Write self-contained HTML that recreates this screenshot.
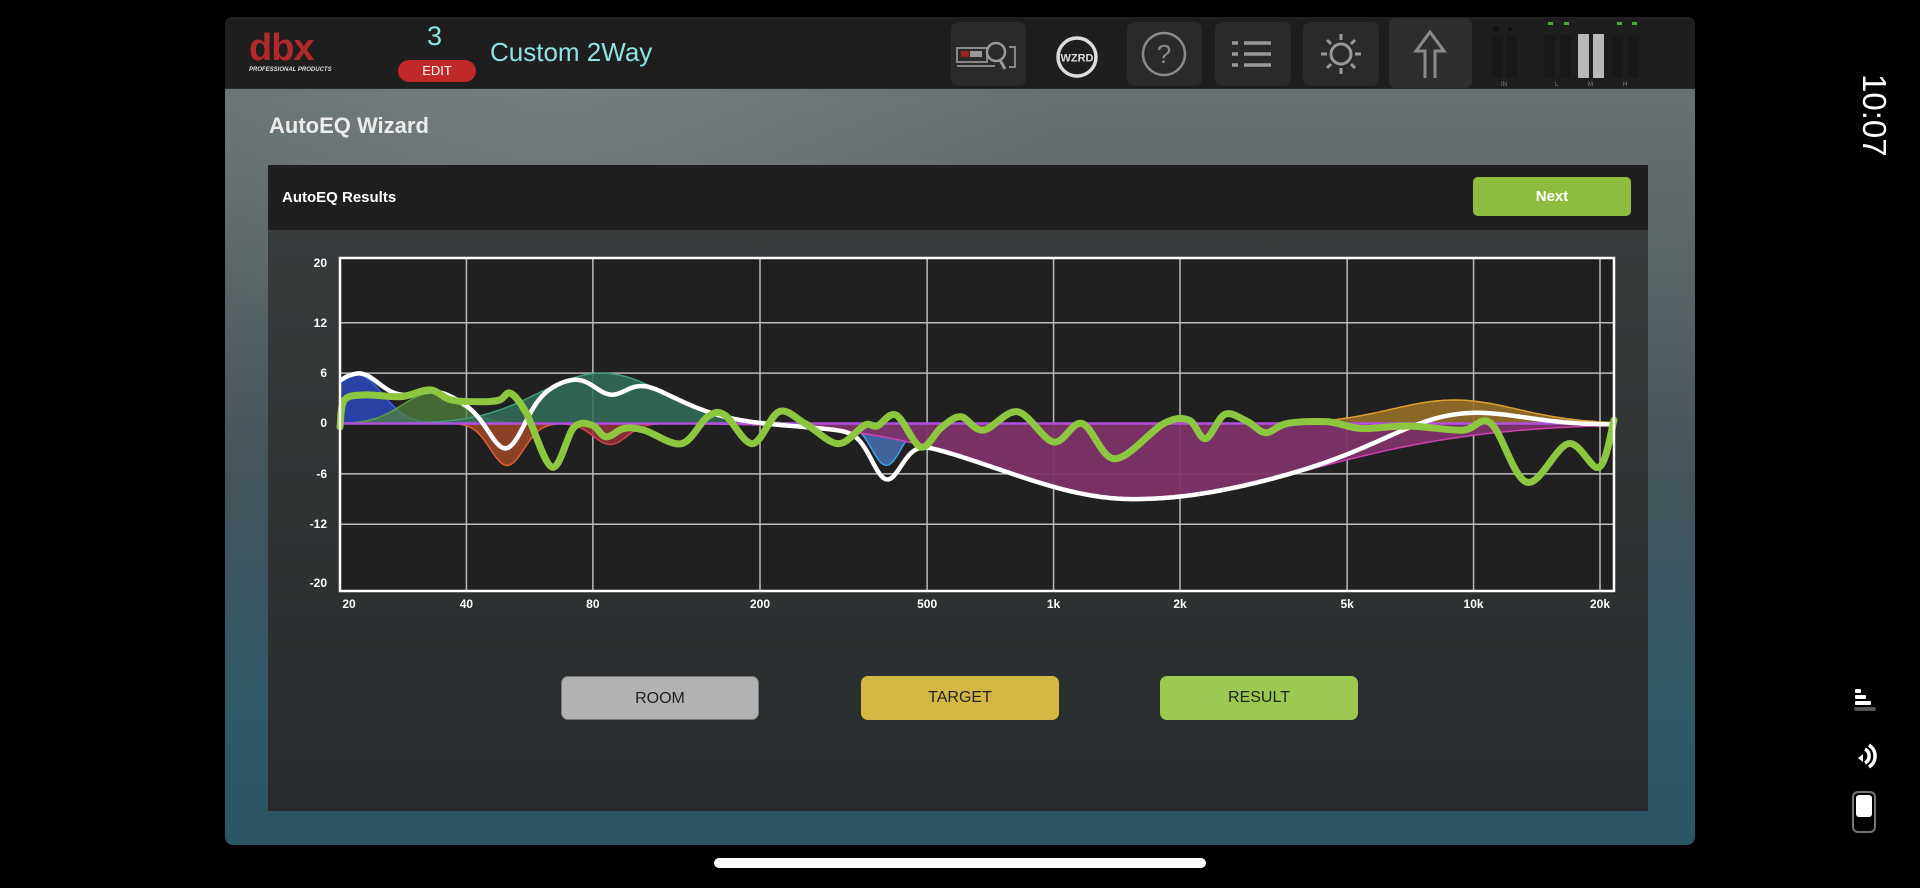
<!DOCTYPE html>
<html><head><meta charset="utf-8">
<style>
*{margin:0;padding:0;box-sizing:border-box}
body{width:1920px;height:888px;background:#000;position:relative;overflow:hidden;font-family:"Liberation Sans",sans-serif}
.app{position:absolute;left:225px;top:17px;width:1470px;height:828px;border-radius:8px;overflow:hidden;
background:
radial-gradient(ellipse 500px 260px at 330px 90px,rgba(140,150,150,0.35),rgba(0,0,0,0) 100%),
linear-gradient(180deg,#6d7675 0%,#5e6869 25%,#44555b 55%,#2e5868 85%,#2b5565 100%);}
.hdr{position:absolute;left:0;top:0;width:1470px;height:72px;background:#1e1e1e;border-bottom:1px solid #2a2a2a}
.abs{position:absolute}
.ib{position:absolute;top:5px;height:64px;background:#2a2a2a;border-radius:7px}
.title{left:44px;top:96px;color:#ececec;font-size:22px;font-weight:bold}
.panel{position:absolute;left:43px;top:148px;width:1380px;height:646px;background:linear-gradient(180deg,#3a3d3e 0%,#303435 50%,#272b2d 100%)}
.phdr{position:absolute;left:0;top:0;width:1380px;height:65px;background:#1f1f1f}
.btn{position:absolute;top:511px;width:198px;height:44px;border-radius:7px;color:#222;font-size:16px;text-align:center;line-height:44px}
</style></head><body>
<div class="app">
 <div class="hdr">
  <div class="abs" style="left:24px;top:14px;color:#b3282b;font-size:38px;font-weight:bold;letter-spacing:-1px;line-height:34px">dbx</div>
  <div class="abs" style="left:24px;top:50px;color:#ddd;font-size:6px;font-style:italic;font-weight:bold">PROFESSIONAL PRODUCTS</div>
  <div class="abs" style="left:202px;top:4px;color:#8fe3e3;font-size:27px">3</div>
  <div class="abs" style="left:173px;top:43px;width:78px;height:22px;border-radius:11px;background:#c0282a;color:#fff;font-size:13px;text-align:center;line-height:22px">EDIT</div>
  <div class="abs" style="left:265px;top:20px;color:#8ee3e3;font-size:26px">Custom 2Way</div>
  <div class="ib" style="left:726px;width:75px"><svg width="75" height="64"><rect x="6" y="26" width="30" height="14" fill="none" stroke="#888" stroke-width="2"/><rect x="10" y="29" width="8" height="6" fill="#a02020"/><rect x="19" y="29" width="12" height="6" fill="#999"/><circle cx="45" cy="30" r="9" fill="none" stroke="#999" stroke-width="2.5"/><line x1="49" y1="38" x2="54" y2="47" stroke="#999" stroke-width="3"/><path d="M58 25h6v20h-6" fill="none" stroke="#888" stroke-width="2"/><line x1="6" y1="44" x2="44" y2="44" stroke="#888" stroke-width="2"/></svg></div>
  <svg class="abs" style="left:829px;top:17px" width="46" height="46"><circle cx="23" cy="23" r="19" fill="none" stroke="#ddd" stroke-width="3.5"/><text x="23" y="27.5" fill="#ddd" font-size="11" font-weight="bold" text-anchor="middle" font-family="Liberation Sans">WZRD</text></svg>
  <div class="ib" style="left:902px;width:75px"><svg width="75" height="64"><circle cx="37" cy="32" r="21" fill="none" stroke="#8a8a8a" stroke-width="2.5"/><text x="37" y="41" fill="#8a8a8a" font-size="26" text-anchor="middle" font-family="Liberation Sans">?</text></svg></div>
  <div class="ib" style="left:990px;width:76px"><svg width="76" height="64"><g stroke="#999" stroke-width="3.5"><line x1="17" y1="21" x2="23" y2="21"/><line x1="29" y1="21" x2="56" y2="21"/><line x1="17" y1="32" x2="23" y2="32"/><line x1="29" y1="32" x2="56" y2="32"/><line x1="17" y1="43" x2="23" y2="43"/><line x1="29" y1="43" x2="56" y2="43"/></g></svg></div>
  <div class="ib" style="left:1078px;width:76px"><svg width="76" height="64"><g stroke="#999" stroke-width="3" fill="none"><circle cx="38" cy="32" r="10"/><line x1="38" y1="12" x2="38" y2="18"/><line x1="38" y1="46" x2="38" y2="52"/><line x1="18" y1="32" x2="24" y2="32"/><line x1="52" y1="32" x2="58" y2="32"/><line x1="24" y1="18" x2="28" y2="22"/><line x1="48" y1="42" x2="52" y2="46"/><line x1="52" y1="18" x2="48" y2="22"/><line x1="28" y1="42" x2="24" y2="46"/></g></svg></div>
  <div class="ib" style="left:1164px;top:1px;width:83px;height:70px;background:#2e2e2e"><svg width="83" height="70"><path d="M36 60V33H27L41 14L55 33H46V60" fill="none" stroke="#8a8a8a" stroke-width="3"/></svg></div>
  <svg class="abs" style="left:1266px;top:0px" width="190" height="72"><g fill="#111"><rect x="3" y="10" width="4" height="4"/><rect x="17" y="10" width="4" height="4"/></g>
   <g fill="#4aa83a"><rect x="57" y="5" width="5" height="3"/><rect x="73" y="5" width="5" height="3"/><rect x="126" y="5" width="5" height="3"/><rect x="141" y="5" width="5" height="3"/></g>
   <g fill="#181818"><rect x="1" y="18" width="11" height="43"/><rect x="15" y="18" width="11" height="43"/><rect x="53" y="18" width="11" height="43"/><rect x="69" y="18" width="11" height="43"/><rect x="121" y="18" width="11" height="43"/><rect x="137" y="18" width="11" height="43"/></g>
   <g fill="#b8b8b8"><rect x="87" y="17" width="11" height="44"/><rect x="102" y="17" width="11" height="44"/></g>
   <g fill="#888" font-size="6" font-family="Liberation Sans"><text x="10" y="69">IN</text><text x="64" y="69">L</text><text x="97" y="69">M</text><text x="132" y="69">H</text></g></svg>
 </div>
 <div class="abs title">AutoEQ Wizard</div>
 <div class="panel">
  <div class="phdr">
   <div class="abs" style="left:14px;top:24px;color:#fff;font-size:15px;font-weight:bold">AutoEQ Results</div>
   <div class="abs" style="left:1205px;top:12px;width:158px;height:39px;background:#8cbd3f;border-radius:5px;color:#fff;font-weight:bold;font-size:15px;text-align:center;line-height:39px">Next</div>
  </div>
  <div class="btn" style="left:293px;background:#b2b2b2;border:1px solid #777">ROOM</div>
  <div class="btn" style="left:593px;background:#d4b843">TARGET</div>
  <div class="btn" style="left:892px;background:#9cc951">RESULT</div>
 </div>
</div>
<svg id="ch" class="abs" style="left:0;top:0" width="1920" height="888"></svg>
<div class="abs" style="left:714px;top:858px;width:492px;height:10px;border-radius:5px;background:#fff"></div>
<div class="abs" style="left:1840px;top:74px;color:#fff;font-size:33px;transform-origin:0 0;transform:translate(53px,0) rotate(90deg)">10:07</div>
<svg class="abs" style="left:1845px;top:680px" width="40" height="170"><g fill="#fff"><rect x="10" y="9" width="6" height="4" rx="1"/><rect x="10" y="15" width="11" height="4" rx="1"/><rect x="10" y="21" width="16" height="4" rx="1"/></g><rect x="9" y="27" width="22" height="4" rx="2" fill="#555"/>
<path d="M13 78l5-4 0 8z" fill="#fff"/><path d="M20 69a8 8 0 0 1 0 14M24 65a13 13 0 0 1 0 22" fill="none" stroke="#fff" stroke-width="3.5"/>
<rect x="8" y="112" width="22" height="40" rx="5" fill="none" stroke="#777" stroke-width="2"/><rect x="11" y="115" width="16" height="22" rx="3" fill="#fff"/></svg>
<script>
var s=document.getElementById('ch'),NS='http://www.w3.org/2000/svg';
function el(t,a){var e=document.createElementNS(NS,t);for(var k in a)e.setAttribute(k,a[k]);s.appendChild(e);return e}
var L=340,R=1614,T=258,B=591;
function X(f){return L+420*Math.log10(f/20)}
function Y(d){return 423.5-8.4*d}
el('rect',{x:L,y:T,width:R-L,height:B-T,fill:'#202020'});
[12,6,0,-6,-12].forEach(function(d){el('line',{x1:L,x2:R,y1:Y(d),y2:Y(d),stroke:'#bbb','stroke-width':1.5})});
[40,80,200,500,1000,2000,5000,10000,20000].forEach(function(f){el('line',{x1:X(f),x2:X(f),y1:T,y2:B,stroke:'#bbb','stroke-width':1.5})});
var yl={20:263,12:323,6:373,0:423,'-6':474,'-12':524,'-20':583};
for(var k in yl){var t=el('text',{x:327,y:yl[k]+4,fill:'#fff','font-size':12,'font-weight':'bold','text-anchor':'end','font-family':'Liberation Sans'});t.textContent=k}
[[20,'20'],[40,'40'],[80,'80'],[200,'200'],[500,'500'],[1000,'1k'],[2000,'2k'],[5000,'5k'],[10000,'10k'],[20000,'20k']].forEach(function(p){var t=el('text',{x:X(p[0])+(p[0]==20?9:0),y:608,fill:'#fff','font-size':12,'font-weight':'bold','text-anchor':'middle','font-family':'Liberation Sans'});t.textContent=p[1]});
function g(G,fc,sl,su){return function(f){var r=Math.log10(f/fc),sg=r<0?sl:su;return G*Math.exp(-r*r/(sg*sg)/2)}}
var F=[
 [g(5.8,22,0.08,0.06),'rgba(45,72,190,0.85)','#3a60e0'],
 [g(3.6,33,0.07,0.07),'rgba(80,130,60,0.75)','#5aa040'],
 [g(-5,50,0.04,0.04),'rgba(160,70,40,0.85)','#e06030'],
 [g(6,84,0.15,0.15),'rgba(50,110,90,0.85)','#40a080'],
 [g(-2.5,88,0.04,0.04),'rgba(150,50,60,0.85)','#d04050'],
 [g(-5,400,0.035,0.035),'rgba(70,110,180,0.85)','#40a0e0'],
 [g(-9,1550,0.32,0.42),'rgba(125,50,105,0.95)','#d040b0'],
 [g(2.8,9000,0.15,0.15),'rgba(150,110,40,0.9)','#e0a030']];
var N=500,fs=[];for(var i=0;i<=N;i++)fs.push(20*Math.pow(10,Math.log10(21700/20)*i/N));
F.forEach(function(o){var d='M'+L+' '+Y(0);fs.forEach(function(f){d+='L'+X(f).toFixed(1)+' '+Y(o[0](f)).toFixed(1)});d+='L'+R+' '+Y(0)+'Z';el('path',{d:d,fill:o[1],stroke:o[2],'stroke-width':1.5})});
el('line',{x1:L,x2:R,y1:Y(0),y2:Y(0),stroke:'#b050e0','stroke-width':2.5});
var d='';fs.forEach(function(f,i){var v=0;F.forEach(function(o){v+=o[0](f)});d+=(i?'L':'M')+X(f).toFixed(1)+' '+Y(v).toFixed(1)});
el('path',{d:d,fill:'none',stroke:'#fff','stroke-width':4.5});
var P=[[20,-0.4],[20.5,2.8],[23,3.4],[28,3.2],[32.8,4],[36.8,2.8],[44,2.6],[48,2.8],[51,3.6],[55.6,1.2],[64,-5.2],[72,-0.5],[79.6,-0.2],[86,-1.6],[94.7,-0.6],[106,-0.8],[130,-2.4],[150,0.8],[165,1],[192,-2.4],[222,1.4],[256,0],[307,-2.4],[355,-0.2],[380,-0.3],[422,1],[483,-2.8],[540,-0.5],[601,0.8],[680,-0.8],[821,1.4],[1000,-2.2],[1170,0],[1400,-4.2],[1830,0],[2100,0.4],[2300,-1.8],[2560,1.1],[2900,0.2],[3200,-1.1],[3600,0],[4500,0.2],[5400,-0.6],[7000,-0.3],[9400,-0.8],[11000,0],[13400,-7],[16800,-2.4],[19900,-5.2],[21600,0.4]];
var pts=P.map(function(p){return [X(p[0]),Y(p[1])]});
var gd='M'+pts[0][0]+' '+pts[0][1];
for(var i=0;i<pts.length-1;i++){var p0=pts[Math.max(0,i-1)],p1=pts[i],p2=pts[i+1],p3=pts[Math.min(pts.length-1,i+2)];
gd+='C'+(p1[0]+(p2[0]-p0[0])/6).toFixed(1)+' '+(p1[1]+(p2[1]-p0[1])/6).toFixed(1)+' '+(p2[0]-(p3[0]-p1[0])/6).toFixed(1)+' '+(p2[1]-(p3[1]-p1[1])/6).toFixed(1)+' '+p2[0].toFixed(1)+' '+p2[1].toFixed(1)}
el('path',{d:gd,fill:'none',stroke:'#8dc63f','stroke-width':7,'stroke-linejoin':'round','stroke-linecap':'round'});
el('rect',{x:L,y:T,width:R-L,height:B-T,fill:'none',stroke:'#fff','stroke-width':2.5});
</script>
</body></html>
